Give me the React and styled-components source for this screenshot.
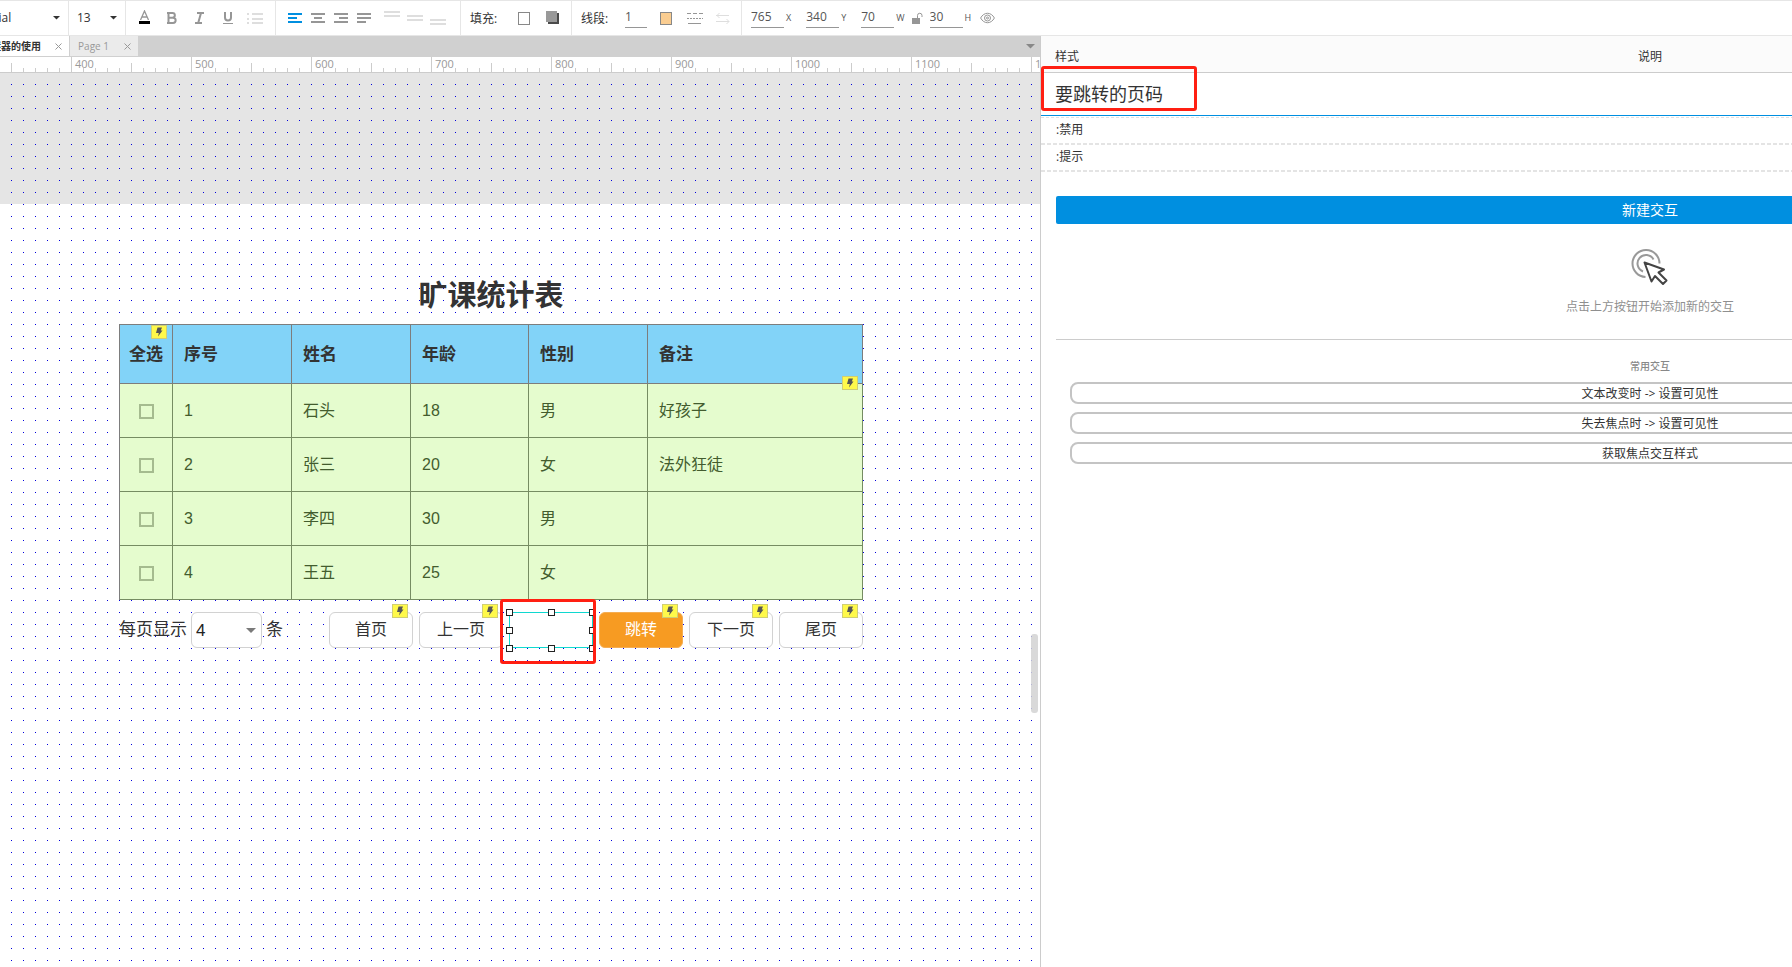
import React from 'react';
import styled, { createGlobalStyle, css } from 'styled-components';

const colors = {
	blue: '#008fe0',
	red: '#ff1f12',
	line: '#e6e6e6',
	icon: '#969696',
	faint: '#dedede',
	text: '#333',
};

const uiFont = '"Open Sans", "Noto Sans CJK SC", sans-serif';
const widgetFont = '"Liberation Sans", "Noto Sans CJK SC", sans-serif';

const GlobalStyle = createGlobalStyle`
	*, *::before, *::after {
		box-sizing: border-box;
	}
	body {
		margin: 0;
		background: #fff;
		color: ${colors.text};
		font-family: ${uiFont};
		font-size: 12px;
		overflow: hidden;
	}
	button, input, select {
		margin: 0;
		padding: 0;
		border: 0;
		border-radius: 0;
		background: none;
		color: inherit;
		font: inherit;
		outline: none;
	}
	select {
		appearance: none;
	}
`

const Window = styled.div`
	display: flex;
	flex-direction: column;
	height: 100vh;
	overflow: hidden;
`

/* toolbar */

const Toolbar = styled.header`
	display: flex;
	flex: none;
	height: 36px;
	border-top: 1px solid ${colors.line};
	border-bottom: 1px solid ${colors.line};
`

const Group = styled.div`
	display: flex;
	align-items: center;
	flex: none;
	width: ${p => p.$width}px;
	padding-left: ${p => p.$pad || 0}px;
	gap: ${p => p.$gap || 0}px;
	border-right: ${p => (p.$last ? 0 : 1)}px solid ${colors.line};
`

const IconButton = styled.button`
	display: flex;
	flex: none;
	width: ${p => p.$width || 16}px;
	margin-left: ${p => p.$space || 0}px;
	svg {
		display: block;
	}
`

const Picker = styled.div`
	display: flex;
	align-items: center;
	width: ${p => p.$width}px;
	margin-left: ${p => p.$shift || 0}px;
	select {
		flex: 1;
		min-width: 0;
		height: 20px;
		padding-bottom: 2px;
	}
`

const Label = styled.span`
	width: ${p => p.$width}px;
	white-space: nowrap;
`

const NumberField = styled.label`
	display: flex;
	align-items: center;
	margin-left: ${p => p.$space || 0}px;
	padding-bottom: 1px;
	font-size: 9px;
	color: #555;
	input {
		width: ${p => p.$width || 33}px;
		height: 20px;
		margin-right: 2px;
		padding-bottom: 2px;
		border-bottom: 1px solid ${colors.icon};
		font-size: 12px;
	}
`

/* document area */

const Main = styled.div`
	display: flex;
	flex: 1;
	min-height: 0;
`

const Editor = styled.div`
	position: relative;
	display: flex;
	flex-direction: column;
	flex: 1;
	min-width: 0;
	overflow: hidden;
`

const Tabs = styled.nav`
	display: flex;
	align-items: center;
	height: 21px;
	padding-right: 5px;
	background: #d0d0d0;
`

const Tab = styled.div`
	display: flex;
	align-items: center;
	justify-content: flex-end;
	width: ${p => (p.$active ? 69 : 68)}px;
	height: 20px;
	padding: 0 7px 0 0;
	gap: ${p => (p.$active ? 14 : 15)}px;
	margin-right: 1px;
	align-self: flex-start;
	overflow: hidden;
	white-space: nowrap;
	background: ${p => (p.$active ? '#fff' : '#ebebeb')};
	color: ${p => (p.$active ? colors.text : '#999')};
	font-size: 10px;
	font-weight: ${p => (p.$active ? 700 : 400)};
	span, svg {
		flex: none;
	}
	span {
		padding-bottom: 1px;
	}
`

const TabMenu = styled(IconButton)`
	margin-left: auto;
`

const Ruler = styled.div`
	display: flex;
	flex: none;
	height: 16px;
	margin-left: -49px;
	border-bottom: 1px solid #ccc;
	overflow: hidden;
`

const RulerStep = styled.div`
	flex: none;
	width: 120px;
	padding-left: 4px;
	color: #999;
	font-size: 11px;
	line-height: 14px;
	background:
		linear-gradient(#ccc, #ccc) 0 0 / 1px 15px no-repeat,
		linear-gradient(#ccc, #ccc) 60px 6px / 1px 9px no-repeat,
		linear-gradient(to right, #ccc 1px, transparent 1px) 0 11px / 12px 4px repeat-x;
`

const Canvas = styled.main`
	flex: 1;
	padding: 193px 0 0 119px;
	font-family: ${widgetFont};
	background:
		conic-gradient(from 270deg at 1px 1px, #00d 90deg, transparent 0) 11px 11px / 12px 12px,
		linear-gradient(#e5e5e5, #e5e5e5) 0 0 / 100% 131px no-repeat,
		#fff;
`

const Sheet = styled.section`
	width: 744px;
`

const Title = styled.h1`
	margin: 0;
	padding-top: 2px;
	font-size: 29px;
	line-height: 56px;
	text-align: center;
`

const Badge = styled.span`
	position: absolute;
	z-index: 1;
	top: ${p => p.$top}px;
	right: ${p => p.$right}px;
	display: flex;
	align-items: center;
	justify-content: center;
	width: 16px;
	height: 14px;
	background: #fff94a;
	border: 1px solid #cfce74;
`

const Table = styled.table`
	width: 744px;
	table-layout: fixed;
	border-collapse: separate;
	border-spacing: 0;
	border: solid #7d7d7d;
	border-width: 1px 0 0 1px;
	font-size: 16px;
	line-height: 20px;
`

const cell = css`
	padding: 1px 0 0 11px;
	text-align: left;
`

const HeadCell = styled.th`
	${cell}
	position: relative;
	width: ${p => p.$width}px;
	height: 59px;
	background: #82d3f8;
	border: solid #7d7d7d;
	border-width: 0 1px 1px 0;
	font-size: 17px;
	${p => p.$center && 'padding-left: 0; text-align: center;'}
`

const Cell = styled.td`
	${cell}
	height: 54px;
	background: #e5fcce;
	border: solid #768c62;
	border-width: 0 1px 1px 0;
	color: #435c2e;
	${p => p.$center && 'padding: 2px 0 0; text-align: center;'}
`

const Check = styled.input`
	appearance: none;
	display: block;
	width: 15px;
	height: 15px;
	margin: 0 auto;
	border: 2px solid #a5bb8f;
`

const Pager = styled.div`
	display: flex;
	align-items: center;
	justify-content: space-between;
	margin-top: 12px;
	font-size: 16px;
`

const PageSize = styled.div`
	display: flex;
	align-items: center;
	font-size: 17px;
	gap: 4px;
	label, span {
		padding-bottom: 5px;
	}
`

const SizeBox = styled.div`
	position: relative;
	select {
		display: block;
		width: 71px;
		height: 36px;
		padding-left: 4px;
		background: #fff;
		border: 1px solid #d2d2d2;
		border-radius: 6px;
		color: #222;
	}
	svg {
		position: absolute;
		top: 16px;
		right: 6px;
		pointer-events: none;
	}
`

const PagerButtons = styled.div`
	display: flex;
	gap: 6px;
`

const Widget = styled.div`
	position: relative;
	width: 84px;
	height: 36px;
	button, input {
		width: 100%;
		height: 100%;
		background: ${p => (p.$primary ? '#f79b22' : '#fff')};
		border: 1px solid ${p => (p.$primary ? '#f5ad52' : '#d2d2d2')};
		border-radius: 6px;
		color: ${p => (p.$primary ? '#fff' : colors.text)};
		padding-bottom: 4px;
	}
	input {
		border-color: #10d8d0;
		border-radius: 0;
	}
`

const Handle = styled.i`
	position: absolute;
	left: ${p => p.$x};
	top: ${p => p.$y};
	width: 7px;
	height: 7px;
	margin: -3px;
	background: #fff;
	border: 1px solid #222;
`

const Mark = styled.div`
	position: absolute;
	z-index: 1;
	left: ${p => p.$left}px;
	top: ${p => p.$top}px;
	width: ${p => p.$width}px;
	height: ${p => p.$height}px;
	border: 3px solid ${colors.red};
	border-radius: 3px;
	pointer-events: none;
`

const ScrollThumb = styled.div`
	position: absolute;
	right: 2px;
	top: 598px;
	width: 7px;
	height: 79px;
	border-radius: 3px;
	background: rgba(210, 210, 210, 0.85);
`

/* inspector */

const Inspector = styled.aside`
	flex: none;
	width: 752px;
	border-left: 1px solid #ccc;
	overflow: hidden;
`

// wider than its pane: the right part runs off the window
const InspectorBody = styled.div`
	width: 1218px;
`

const InspectorHead = styled.div`
	display: grid;
	grid-template-columns: 1fr auto 1fr;
	align-items: end;
	height: 37px;
	padding: 0 14px 6px;
	background: #fbfbfb;
	border-bottom: 1px solid #ccc;
	line-height: 18px;
`

const NameRow = styled.div`
	position: relative;
	height: 45px;
	border-bottom: 1px dashed #e2e2e2;
	input {
		display: block;
		width: 100%;
		height: 43px;
		padding: 0 14px 2px;
		border-bottom: 1px solid ${colors.blue};
		font-size: 18px;
	}
`

const StateRow = styled.div`
	height: 27px;
	padding-left: 15px;
	line-height: 24px;
	background: repeating-linear-gradient(to right, #e4e4e4 0 4px, transparent 4px 6px) 0 100% / 100% 2px no-repeat;
`

const Interactions = styled.div`
	padding: 24px 15px 0;
	text-align: center;
`

const NewButton = styled.button`
	display: block;
	width: 100%;
	height: 28px;
	padding-bottom: 2px;
	border-radius: 2px;
	background: ${colors.blue};
	color: #fff;
	font-size: 14px;
`

const Empty = styled.div`
	display: flex;
	flex-direction: column;
	align-items: center;
	height: 116px;
	padding-top: 25px;
	border-bottom: 1px solid #ccc;
	color: #8f8f8f;
	p {
		margin: 11px 0 0;
		line-height: 18px;
	}
`

const CommonTitle = styled.h2`
	margin: 18px 0 7px;
	color: #888;
	font-size: 10px;
	font-weight: 500;
	line-height: 17px;
`

const CommonList = styled.div`
	display: grid;
	gap: 8px;
	padding: 0 14px;
	button {
		height: 22px;
		padding-top: 1px;
		border: 2px solid #c4c4c4;
		border-radius: 8px;
		line-height: 17px;
	}
`

const Caret = ({ width = 8, color = '#333' }) => (
	<svg width={width} height={width / 2} viewBox="0 0 8 4" aria-hidden="true">
		<path d="M0 0h8L4 4z" fill={color} />
	</svg>
)

const Close = () => (
	<svg width="7" height="7" viewBox="0 0 7 7" stroke="#999" aria-hidden="true">
		<path d="M0.5 0.5l6 6M6.5 0.5l-6 6" />
	</svg>
)

// each line is [x, y, width] of a 2px stroke
const Bars = ({ lines, color = colors.icon, width = 14 }) => (
	<svg width={width} height="16" viewBox={`0 0 ${width} 16`} fill={color} aria-hidden="true">
		{lines.map(([x, y, w]) => <rect key={`${x}-${y}`} x={x} y={y} width={w} height="2" />)}
	</svg>
)

const Bolt = () => (
	<svg width="8" height="10" viewBox="0 0 8 10" aria-hidden="true">
		<path d="M2.5 0.5H7L5.8 3.5H7.5L3 9.5 3.8 6H1z" fill="#555" />
	</svg>
)

const aligns = [
	['左对齐', [[0, 3, 14], [0, 7, 9], [0, 11, 14]], colors.blue],
	['居中', [[0, 3, 14], [3, 7, 8], [0, 11, 14]]],
	['右对齐', [[0, 3, 14], [5, 7, 9], [0, 11, 14]]],
	['两端对齐', [[0, 3, 14], [0, 7, 14], [0, 11, 9]]],
]

const valigns = [
	['顶部', [[0, 1, 16], [0, 5, 16]]],
	['中部', [[0, 5, 16], [0, 9, 16]]],
	['底部', [[0, 9, 16], [0, 13, 16]]],
]

const columns = [
	['全选', 53],
	['序号', 119],
	['姓名', 119],
	['年龄', 118],
	['性别', 119],
	['备注', 215],
]

const rows = [
	['1', '石头', '18', '男', '好孩子'],
	['2', '张三', '20', '女', '法外狂徒'],
	['3', '李四', '30', '男', ''],
	['4', '王五', '25', '女', ''],
]

const handles = [0, 50, 99].flatMap(y => [0, 50, 99].map(x => [x, y]))
	.filter(([x, y]) => x !== 50 || y !== 50)

const common = ['文本改变时 -> 设置可见性', '失去焦点时 -> 设置可见性', '获取焦点交互样式']

const TopBar = () => (
	<Toolbar>
		<Group $width={69}>
			<Picker $width={74} $shift={-14}>
				<select aria-label="字体"><option>Arial</option></select>
				<Caret width={7} />
			</Picker>
		</Group>
		<Group $width={57} $pad={8}>
			<Picker $width={40}>
				<select aria-label="字号"><option>13</option></select>
				<Caret width={7} />
			</Picker>
		</Group>
		<Group $width={150} $pad={13} $gap={12}>
			<IconButton aria-label="文字颜色">
				<svg width="16" height="16" viewBox="0 0 16 16" fill="none">
					<path d="M1.5 10L5.5 1l4 9M3 7h5" stroke={colors.icon} strokeWidth="1.3" />
					<path d="M0 11h11v3H0z" fill="#000" />
				</svg>
			</IconButton>
			<IconButton aria-label="加粗">
				<svg width="16" height="16" viewBox="0 0 16 16" fill="none" stroke={colors.icon} strokeWidth="2">
					<path d="M0 3h5.5a2.3 2.3 0 0 1 0 4.7H1M1 7.7h5a2.6 2.6 0 0 1 0 5.3H0M1.5 3v10" />
				</svg>
			</IconButton>
			<IconButton aria-label="斜体">
				<svg width="16" height="16" viewBox="0 0 16 16" fill="none" stroke={colors.icon} strokeWidth="2">
					<path d="M2 3h7M0 13h7M6 3L3.2 13" />
				</svg>
			</IconButton>
			<IconButton aria-label="下划线">
				<svg width="16" height="16" viewBox="0 0 16 16" fill="none" stroke={colors.icon}>
					<path d="M2 2v5.5a3 3 0 0 0 6 0V2" strokeWidth="2" />
					<path d="M0 13.5h10" />
				</svg>
			</IconButton>
			<IconButton aria-label="项目符号" $space={-4}>
				<Bars width={16} color={colors.faint} lines={[[0, 3, 2], [5, 3, 11], [0, 8, 2], [5, 8, 11], [0, 12, 2], [5, 12, 11]]} />
			</IconButton>
		</Group>
		<Group $width={185} $pad={12} $gap={7}>
			{aligns.map(([name, lines, color]) => (
				<IconButton key={name} aria-label={name}><Bars lines={lines} color={color} /></IconButton>
			))}
			{valigns.map(([name, lines], i) => (
				<IconButton key={name} aria-label={name} $space={i ? 0 : 4}>
					<Bars width={16} lines={lines} color={colors.faint} />
				</IconButton>
			))}
		</Group>
		<Group $width={111} $pad={9}>
			<Label $width={48}>填充:</Label>
			<IconButton aria-label="填充颜色">
				<svg width="13" height="13" viewBox="0 0 13 13"><rect x=".5" y=".5" width="11" height="12" fill="#fff" stroke="#888" /></svg>
			</IconButton>
			<IconButton aria-label="阴影" $space={12}>
				<svg width="14" height="14" viewBox="0 0 14 14">
					<path d="M2 2h11v11H2z" fill="#4a4a4a" />
					<path d="M0 0h11v11H0z" fill="#999" />
				</svg>
			</IconButton>
		</Group>
		<Group $width={170} $pad={9}>
			<Label $width={44}>线段:</Label>
			<NumberField $width={22}><input aria-label="线宽" defaultValue="1" /></NumberField>
			<IconButton aria-label="线段颜色" $space={11}>
				<svg width="13" height="13" viewBox="0 0 13 13"><rect x=".5" y=".5" width="11" height="12" fill="#facd91" stroke="#888" /></svg>
			</IconButton>
			<IconButton aria-label="线型" $space={11}>
				<svg width="16" height="13" viewBox="0 0 16 13" stroke={colors.icon}>
					<path d="M0 1.5h16" strokeDasharray="4 2" />
					<path d="M0 6.5h16" strokeDasharray="2 1" />
					<path d="M1 11.5h13" />
				</svg>
			</IconButton>
			<IconButton aria-label="箭头" $space={13}>
				<svg width="14" height="13" viewBox="0 0 14 13" fill="none" stroke={colors.faint}>
					<path d="M0 3.5h13M3.5 1L1 3.5 3.5 6M0 9.5h13M10.5 7L13 9.5 10.5 12" />
				</svg>
			</IconButton>
		</Group>
		<Group $width={300} $pad={9} $last>
			<NumberField><input defaultValue="765" />X</NumberField>
			<NumberField $space={15}><input defaultValue="340" />Y</NumberField>
			<NumberField $space={15}><input defaultValue="70" />W</NumberField>
			<IconButton aria-label="锁定比例" $width={11} $space={7}>
				<svg width="11" height="13" viewBox="0 0 11 13">
					<path d="M0 6h8v6H0z" fill={colors.icon} />
					<path d="M5.5 6V3.5a2.2 2.2 0 0 1 4.500 0V5" fill="none" stroke={colors.icon} />
				</svg>
			</IconButton>
			<NumberField $space={7}><input defaultValue="30" />H</NumberField>
			<IconButton aria-label="可见性" $space={9}>
				<svg width="15" height="12" viewBox="0 0 15 12" fill="none" stroke={colors.icon}>
					<path d="M0.6 6C4 -0.3 11 -0.3 14.4 6 11 12.3 4 12.3 0.6 6z" />
					<circle cx="7.5" cy="6" r="3" />
					<circle cx="7.5" cy="6" r="1" />
				</svg>
			</IconButton>
		</Group>
	</Toolbar>
)

const DataTable = () => (
	<Table>
		<thead>
			<tr>
				{columns.map(([name, width], i) => (
					<HeadCell key={name} $width={width} $center={i === 0}>
						{name}
						{i === 0 && <Badge $top={0} $right={5}><Bolt /></Badge>}
						{i === 5 && <Badge $top={51} $right={4}><Bolt /></Badge>}
					</HeadCell>
				))}
			</tr>
		</thead>
		<tbody>
			{rows.map(row => (
				<tr key={row[0]}>
					<Cell $center><Check type="checkbox" aria-label={`选择 ${row[1]}`} /></Cell>
					{row.map((value, i) => <Cell key={i}>{value}</Cell>)}
				</tr>
			))}
		</tbody>
	</Table>
)

const PageButton = ({ primary, children }) => (
	<Widget $primary={primary}>
		<button>{children}</button>
		<Badge $top={-8} $right={5}><Bolt /></Badge>
	</Widget>
)

const App = () => {
	return (
		<Window>
			<GlobalStyle />
			<TopBar />
			<Main>
				<Editor>
					<Tabs>
						<Tab $active><span>中继器的使用</span><Close /></Tab>
						<Tab><span>Page 1</span><Close /></Tab>
						<TabMenu $width={9} aria-label="标签列表"><Caret width={9} color="#888" /></TabMenu>
					</Tabs>
					<Ruler>
						{[300, 400, 500, 600, 700, 800, 900, 1000, 1100, 1200].map(n => (
							<RulerStep key={n}>{n}</RulerStep>
						))}
					</Ruler>
					<Canvas>
						<Sheet>
							<Title>旷课统计表</Title>
							<DataTable />
							<Pager>
								<PageSize>
									<label htmlFor="page-size">每页显示</label>
									<SizeBox>
										<select id="page-size"><option>4</option></select>
										<Caret width={10} color="#7a7a7a" />
									</SizeBox>
									<span>条</span>
								</PageSize>
								<PagerButtons>
									<PageButton>首页</PageButton>
									<PageButton>上一页</PageButton>
									<Widget>
										<input aria-label="要跳转的页码" />
										{handles.map(([x, y]) => <Handle key={`${x}-${y}`} $x={`${x}%`} $y={`${y}%`} />)}
										<Mark $left={-9} $top={-13} $width={96} $height={65} />
									</Widget>
									<PageButton primary>跳转</PageButton>
									<PageButton>下一页</PageButton>
									<PageButton>尾页</PageButton>
								</PagerButtons>
							</Pager>
						</Sheet>
					</Canvas>
					<ScrollThumb />
				</Editor>
				<Inspector>
					<InspectorBody>
						<InspectorHead><span>样式</span><span>说明</span></InspectorHead>
						<NameRow>
							<input aria-label="名称" defaultValue="要跳转的页码" />
							<Mark $left={0} $top={-7} $width={156} $height={45} />
						</NameRow>
						<StateRow>:禁用</StateRow>
						<StateRow>:提示</StateRow>
						<Interactions>
							<NewButton>新建交互</NewButton>
							<Empty>
								<svg width="38" height="38" viewBox="0 0 38 38" fill="none" strokeWidth="2" aria-hidden="true">
									<path d="M14.5 28A13.5 13.5 0 1 1 28.5 14.5" stroke="#999" />
									<path d="M12 22.5A8.500 8.500 0 1 1 22.500 10.500" stroke="#999" />
									<path d="M13.5 13.5l7 19 3.500-5.500 8 8 3.500-3.500-8-8 5.500-3z" fill="#fff" stroke="#444" strokeLinejoin="round" />
								</svg>
								<p>点击上方按钮开始添加新的交互</p>
							</Empty>
							<CommonTitle>常用交互</CommonTitle>
							<CommonList>
								{common.map(name => <button key={name}>{name}</button>)}
							</CommonList>
						</Interactions>
					</InspectorBody>
				</Inspector>
			</Main>
		</Window>
	);
}

export default App;
